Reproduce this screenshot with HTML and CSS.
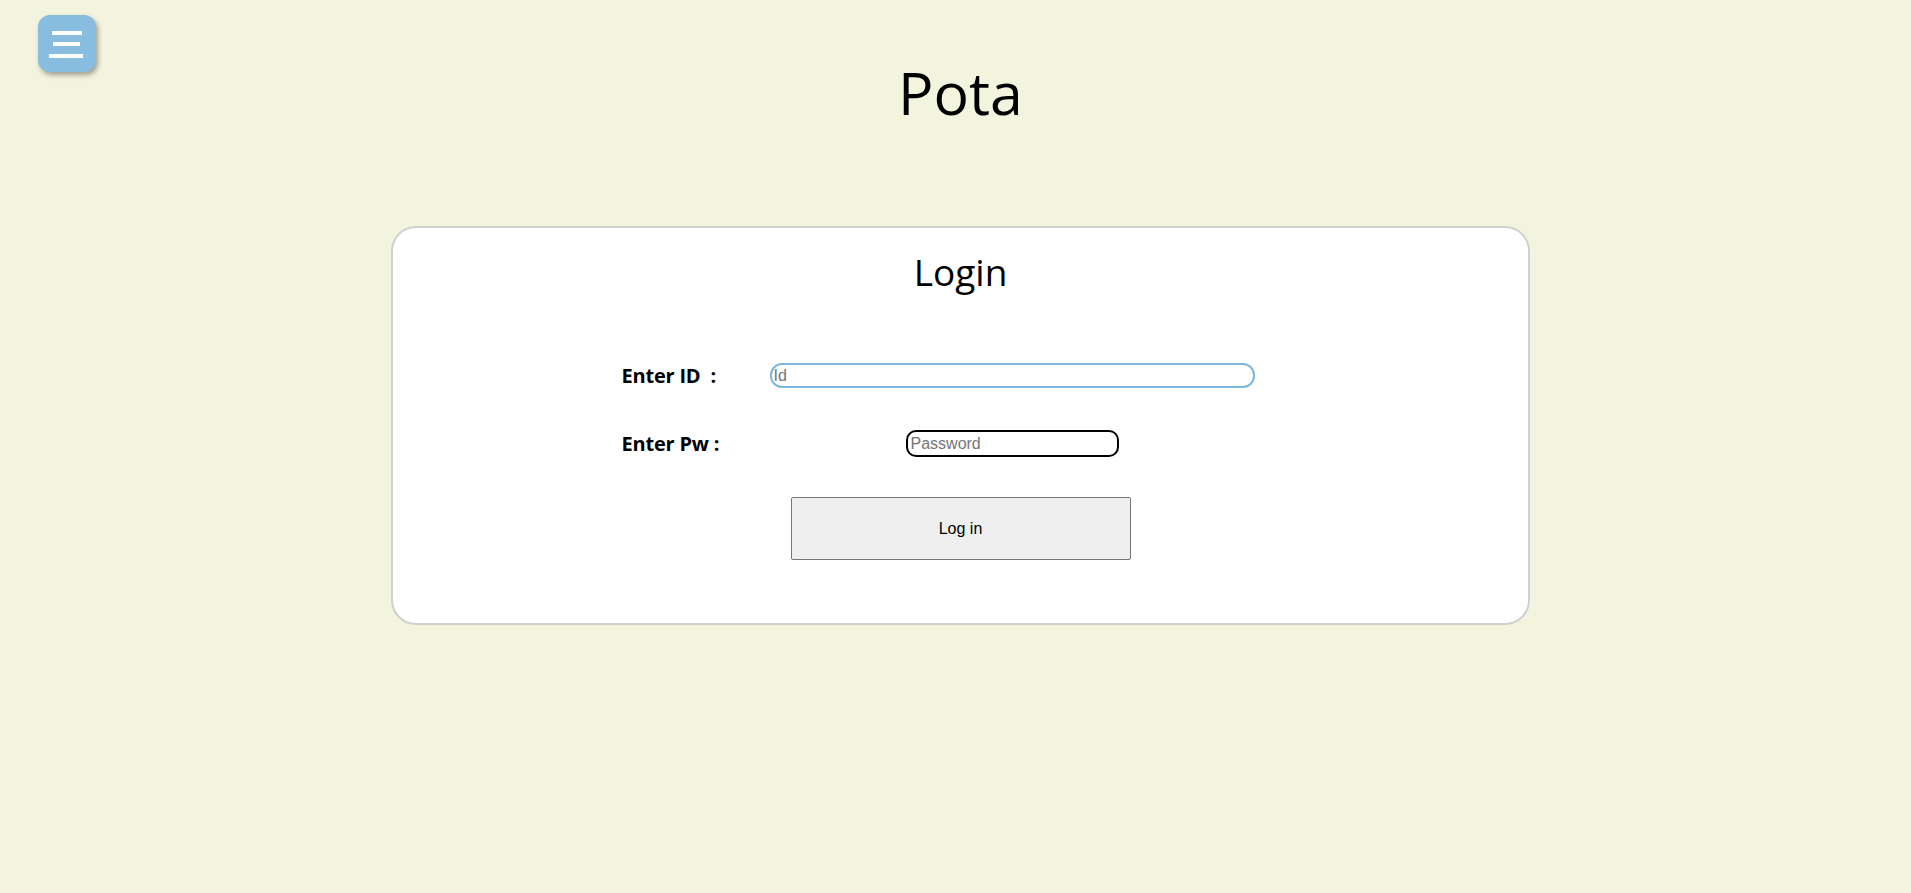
FILE: index.html
```html
<!DOCTYPE html>
<html lang="en">
<head>
<meta charset="utf-8">
<title>Pota</title>
<link rel="stylesheet" href="styles.css">
</head>
<body>
<button class="menu-btn" type="button" aria-label="Menu">
  <span class="bar bar-top"></span>
  <span class="bar bar-mid"></span>
  <span class="bar bar-bot"></span>
</button>
<main class="page">
  <h1 class="title">Pota</h1>
  <section class="card">
    <h2 class="card-title">Login</h2>
    <form class="form">
      <div class="form-grid">
        <label class="label" for="id">Enter ID&nbsp; :</label>
        <div class="field"><input class="input input-id" id="id" type="text" placeholder="Id" autofocus></div>
        <label class="label" for="pw">Enter Pw :</label>
        <div class="field"><input class="input input-pw" id="pw" type="password" placeholder="Password"></div>
      </div>
      <button class="submit" type="button">Log in</button>
    </form>
  </section>
</main>
</body>
</html>
```

FILE: styles.css
```css
html, body {
  margin: 0;
  padding: 0;
}
body {
  background: #f3f4de;
  font-family: "Open Sans", "Noto Sans", sans-serif;
  color: #000;
  min-height: 893px;
}
.menu-btn {
  position: absolute;
  left: 38px;
  top: 15px;
  width: 58px;
  height: 57px;
  border: none;
  border-radius: 12px;
  background: #89bde0;
  box-shadow: 2px 3px 5px rgba(0, 0, 0, 0.35);
  padding: 0;
  cursor: pointer;
}
.bar {
  position: absolute;
  height: 4px;
  background: #fff;
}
.bar-top { left: 14px; width: 30px; top: 16px; }
.bar-mid { left: 15px; width: 27px; top: 27px; }
.bar-bot { left: 11px; width: 34px; top: 39px; }

.page {
  display: flex;
  flex-direction: column;
  align-items: center;
  padding-left: 10px;
}
.title {
  margin: 51px 0 0;
  font-size: 59px;
  font-weight: 400;
  line-height: 82px;
}
.card {
  box-sizing: border-box;
  margin-top: 93px;
  width: 1139px;
  background: #fff;
  border: 2px solid #d0d0d0;
  border-radius: 25px;
  padding: 20px 0 63px;
  display: flex;
  flex-direction: column;
  align-items: center;
}
.card-title {
  margin: 0;
  font-size: 37px;
  font-weight: 400;
  line-height: 48px;
}
.form {
  display: flex;
  flex-direction: column;
  align-items: center;
  width: 100%;
}
.form-grid {
  margin-top: 59px;
  display: grid;
  grid-template-columns: 148px 485px;
  grid-auto-rows: 41px;
  row-gap: 27px;
  align-items: center;
  padding-right: 45px;
}
.label {
  font-weight: 700;
  font-size: 20px;
  line-height: 27px;
  letter-spacing: -0.2px;
}
.field {
  display: flex;
  justify-content: center;
}
.input {
  box-sizing: border-box;
  font-family: "Liberation Sans", Arial, sans-serif;
  font-size: 16px;
  padding: 0 3px;
  background: #fff;
  outline: none;
  color: #000;
}
.input::placeholder {
  color: #757575;
}
.input-id {
  width: 485px;
  height: 25px;
  border: 2px solid #7fb6dc;
  border-radius: 12px;
  padding-left: 2px;
}
.input-pw {
  width: 213px;
  height: 27px;
  border: 2px solid #000;
  border-radius: 10px;
}
.submit {
  margin-top: 33px;
  width: 340px;
  height: 63px;
  background: #efefef;
  border: 1px solid #767676;
  border-radius: 2px;
  font-family: "Liberation Sans", Arial, sans-serif;
  font-size: 16px;
  color: #000;
}
```
